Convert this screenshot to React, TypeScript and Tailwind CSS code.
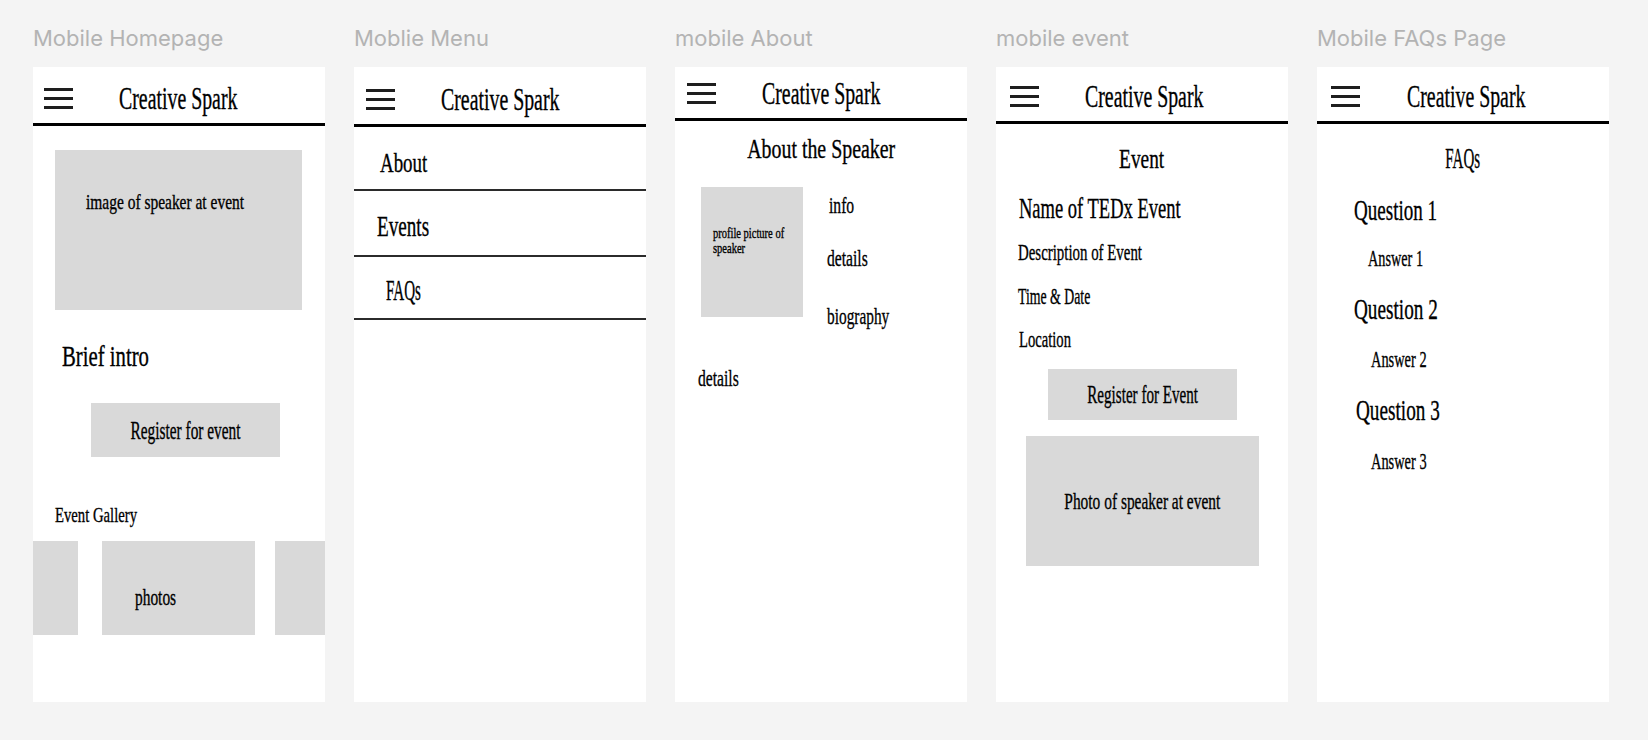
import React from "react";

const serif =
  "font-['Liberation_Serif',serif] text-black leading-none whitespace-nowrap inline-block [-webkit-text-stroke:0.35px_black]";

function S({ c, children }: { c: string; children: React.ReactNode }) {
  return <span className={`${serif} ${c}`}>{children}</span>;
}

function Burger({ c }: { c: string }) {
  return (
    <div className={`flex flex-col gap-[6px] w-[29px] shrink-0 ${c}`}>
      <div className="h-[3px] bg-[#1e1e1e]" />
      <div className="h-[3px] bg-[#1e1e1e]" />
      <div className="h-[3px] bg-[#1e1e1e]" />
    </div>
  );
}

function Header({ h, b, t }: { h: string; b: string; t: string }) {
  return (
    <>
      <div className={`flex items-start shrink-0 ${h}`}>
        <Burger c={b} />
        <div className={`flex ${t}`}>
          <S c="text-[32px] scale-x-[0.62] origin-left">Creative Spark</S>
        </div>
      </div>
      <div className="h-[3px] bg-black shrink-0" />
    </>
  );
}

function Column({ label, children }: { label: string; children: React.ReactNode }) {
  return (
    <div className="flex flex-col w-[292px] shrink-0">
      <div className="h-[27px] leading-[27px] text-[22px] text-[#b3b3b3] font-['Inter',sans-serif] whitespace-nowrap">
        {label}
      </div>
      <div className="mt-[15px] h-[635px] bg-white flex flex-col overflow-hidden">{children}</div>
    </div>
  );
}

function Homepage() {
  return (
    <Column label="Mobile Homepage">
      <Header h="h-[56px]" b="ml-[11px] mt-[21px]" t="ml-[46px] mt-[15px]" />
      <div className="ml-[22px] mt-[24px] w-[247px] h-[160px] bg-[#d9d9d9] flex flex-col pl-[31px] pt-[41px]">
        <div className="flex">
          <S c="text-[22px] scale-x-[0.703] origin-left">image of speaker at event</S>
        </div>
      </div>
      <div className="flex ml-[29px] mt-[32px]">
        <S c="text-[29px] scale-x-[0.715] origin-left">Brief intro</S>
      </div>
      <div className="ml-[58px] mt-[32px] w-[189px] h-[54px] bg-[#d9d9d9] flex items-center justify-center">
        <S c="text-[25px] scale-x-[0.614] origin-center">Register for event</S>
      </div>
      <div className="flex ml-[22px] mt-[47px]">
        <S c="text-[22px] scale-x-[0.668] origin-left">Event Gallery</S>
      </div>
      <div className="flex mt-[15px] h-[94px]">
        <div className="w-[45px] h-full bg-[#d9d9d9] shrink-0" />
        <div className="ml-[24px] w-[153px] h-full bg-[#d9d9d9] shrink-0 flex flex-col pl-[33px] pt-[45px]">
          <div className="flex">
            <S c="text-[23px] scale-x-[0.67] origin-left">photos</S>
          </div>
        </div>
        <div className="ml-[20px] w-[50px] h-full bg-[#d9d9d9] shrink-0" />
      </div>
    </Column>
  );
}

function Menu() {
  return (
    <Column label="Moblie Menu">
      <Header h="h-[57px]" b="ml-[12px] mt-[22px]" t="ml-[46px] mt-[16px]" />
      <div className="h-[62px] flex items-start pl-[26px] pt-[23px]">
        <S c="text-[27px] scale-x-[0.70] origin-left">About</S>
      </div>
      <div className="h-[2px] bg-[#2b2b2b]" />
      <div className="h-[64px] flex items-start pl-[23px] pt-[21px]">
        <S c="text-[29px] scale-x-[0.66] origin-left">Events</S>
      </div>
      <div className="h-[2px] bg-[#2b2b2b]" />
      <div className="h-[61px] flex items-start pl-[32px] pt-[19px]">
        <S c="text-[29px] scale-x-[0.52] origin-left">FAQs</S>
      </div>
      <div className="h-[2px] bg-[#2b2b2b]" />
    </Column>
  );
}

function About() {
  return (
    <Column label="mobile About">
      <Header h="h-[51px]" b="ml-[12px] mt-[16px]" t="ml-[46px] mt-[10px]" />
      <div className="flex justify-center mt-[14px]">
        <S c="text-[28px] scale-x-[0.71] origin-center">About the Speaker</S>
      </div>
      <div className="flex items-start mt-[24px]">
        <div className="ml-[26px] w-[102px] h-[130px] bg-[#d9d9d9] shrink-0 flex flex-col pl-[12px] pt-[39px]">
          <S c="text-[15px] leading-[16px] scale-x-[0.70] origin-left">profile picture of</S>
          <S c="text-[15px] leading-[16px] scale-x-[0.70] origin-left">speaker</S>
        </div>
        <div className="ml-[24px] flex flex-col items-start">
          <div className="flex ml-[2px] mt-[6px]">
            <S c="text-[24px] scale-x-[0.65] origin-left">info</S>
          </div>
          <div className="flex mt-[29px]">
            <S c="text-[24px] scale-x-[0.65] origin-left">details</S>
          </div>
          <div className="flex mt-[34px]">
            <S c="text-[24px] scale-x-[0.64] origin-left">biography</S>
          </div>
        </div>
      </div>
      <div className="flex ml-[23px] mt-[38px]">
        <S c="text-[24px] scale-x-[0.65] origin-left">details</S>
      </div>
    </Column>
  );
}

function EventPage() {
  return (
    <Column label="mobile event">
      <Header h="h-[54px]" b="ml-[14px] mt-[19px]" t="ml-[46px] mt-[13px]" />
      <div className="flex justify-center mt-[21px]">
        <S c="text-[28px] scale-x-[0.69] origin-center">Event</S>
      </div>
      <div className="flex ml-[23px] mt-[20px]">
        <S c="text-[30px] scale-x-[0.617] origin-left">Name of TEDx Event</S>
      </div>
      <div className="flex ml-[22px] mt-[17px]">
        <S c="text-[24px] scale-x-[0.62] origin-left">Description of Event</S>
      </div>
      <div className="flex ml-[22px] mt-[21px]">
        <S c="text-[23px] scale-x-[0.60] origin-left">Time &amp; Date</S>
      </div>
      <div className="flex ml-[23px] mt-[20px]">
        <S c="text-[23px] scale-x-[0.636] origin-left">Location</S>
      </div>
      <div className="ml-[52px] mt-[18px] w-[189px] h-[51px] bg-[#d9d9d9] flex items-center justify-center">
        <S c="text-[25px] scale-x-[0.604] origin-center">Register for Event</S>
      </div>
      <div className="ml-[30px] mt-[16px] w-[233px] h-[130px] bg-[#d9d9d9] flex items-center justify-center">
        <S c="text-[24px] scale-x-[0.643] origin-center">Photo of speaker at event</S>
      </div>
    </Column>
  );
}

function Faqs() {
  return (
    <Column label="Mobile FAQs Page">
      <Header h="h-[54px]" b="ml-[14px] mt-[19px]" t="ml-[47px] mt-[13px]" />
      <div className="flex justify-center mt-[19px]">
        <S c="text-[30px] scale-x-[0.50] origin-center">FAQs</S>
      </div>
      <div className="flex ml-[37px] mt-[22px]">
        <S c="text-[30px] scale-x-[0.635] origin-left">Question 1</S>
      </div>
      <div className="flex ml-[51px] mt-[21px]">
        <S c="text-[24px] scale-x-[0.594] origin-left">Answer 1</S>
      </div>
      <div className="flex ml-[37px] mt-[24px]">
        <S c="text-[30px] scale-x-[0.64] origin-left">Question 2</S>
      </div>
      <div className="flex ml-[54px] mt-[23px]">
        <S c="text-[24px] scale-x-[0.60] origin-left">Answer 2</S>
      </div>
      <div className="flex ml-[39px] mt-[24px]">
        <S c="text-[30px] scale-x-[0.64] origin-left">Question 3</S>
      </div>
      <div className="flex ml-[54px] mt-[24px]">
        <S c="text-[24px] scale-x-[0.60] origin-left">Answer 3</S>
      </div>
    </Column>
  );
}

export default function App() {
  return (
    <div className="min-h-screen w-full bg-[#f4f4f4] flex gap-[29px] pl-[33px] pt-[25px]">
      <Homepage />
      <Menu />
      <About />
      <EventPage />
      <Faqs />
    </div>
  );
}
